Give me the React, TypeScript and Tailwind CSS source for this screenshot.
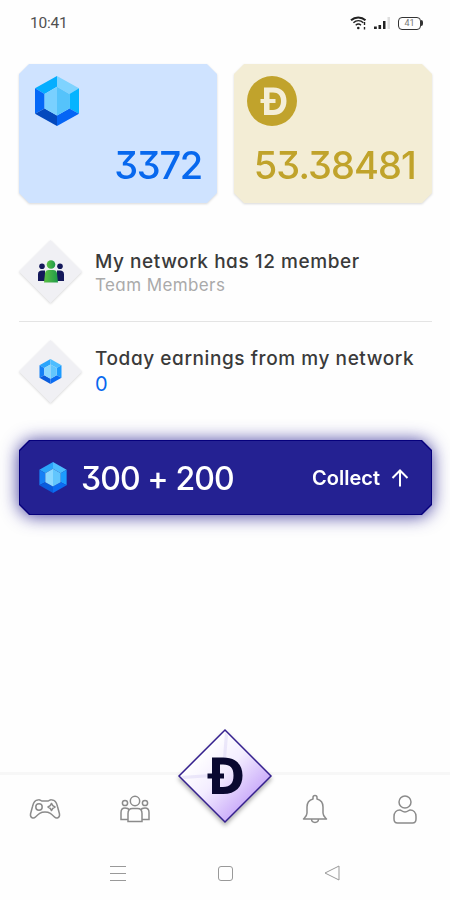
import type { ReactNode } from "react";
import clsx from "clsx";

const cutCorners =
  "[clip-path:polygon(10px_0,calc(100%-10px)_0,100%_10px,100%_calc(100%-10px),calc(100%-10px)_100%,10px_100%,0_calc(100%-10px),0_10px)]";

function Gem({ className }: { className?: string }) {
  return (
    <svg className={className} viewBox="0 0 44 50">
      <path fill="#05aeff" d="M22 0 0 12.3l9.6 5.7L22 10.8z" />
      <path fill="#7fd3ff" d="m22 0 22 12.3-9.6 5.7L22 10.8z" />
      <path fill="#0568f7" d="M0 12.3 9.6 18v14.6L0 37.7z" />
      <path fill="#05b4ff" d="M44 12.3 34.4 18v14.6l9.6 5.1z" />
      <path fill="#0449bd" d="m0 37.7 9.6-5.1L22 39.4V50z" />
      <path fill="#0565f5" d="m44 37.7-9.6-5.1L22 39.4V50z" />
      <path fill="#79d0ff" d="m22 10.8-12.4 7.2v14.6L22 39.4z" />
      <path fill="#55c3fb" d="m22 10.8 12.4 7.2v14.6L22 39.4z" />
    </svg>
  );
}

// softer shading, used where the gem is drawn small
function SmallGem({ className }: { className?: string }) {
  return (
    <svg className={className} viewBox="0 0 44 50">
      <path fill="#2aa5fb" d="M22 0 0 12.3l9.6 5.7L22 10.800z" />
      <path fill="#4dbdff" d="m22 0 22 12.3-9.6 5.7L22 10.8z" />
      <path fill="#1580f5" d="M0 12.3 9.6 18v14.6L0 37.7z" />
      <path fill="#1c9cff" d="M44 12.3 34.4 18v14.6l9.6 5.1z" />
      <path fill="#0a5cdc" d="m0 37.7 9.6-5.1L22 39.4V50z" />
      <path fill="#0b6cf2" d="m44 37.7-9.6-5.1L22 39.4V50z" />
      <path fill="#8ad8ff" d="m22 10.8-12.4 7.2v14.6L22 39.4z" />
      <path fill="#62c6fd" d="m22 10.8 12.4 7.2v14.6L22 39.4z" />
    </svg>
  );
}

function StatusBar() {
  return (
    <div className="flex h-[46px] items-center justify-between pr-[27px] pl-[30px]">
      <span className="pt-0.5 font-[Roboto] text-[15.5px] tracking-[-0.2px] text-[#505050]">10:41</span>
      <div className="flex items-center gap-[7px] text-[#222]">
        <svg className="h-[14px] w-[17px]" viewBox="0 0 17 14" fill="none" stroke="currentColor">
          <path strokeWidth="2" d="M1 4.2C5 .5 11.500.5 15.500 4.200" />
          <path strokeWidth="1.500" d="M3.400 6.700c3-2.700 7-2.700 10 0" />
          <path strokeWidth="1.400" d="M5.700 9.200c1.700-1.400 3.700-1.400 5.300 0" />
          <path strokeWidth="1.400" d="M14.500 6v3M14.500 11v2.500" />
          <circle cx="8.300" cy="12" r="1.300" fill="currentColor" stroke="none" />
        </svg>
        <svg className="h-[14px] w-[17px]" viewBox="0 0 17 14" fill="currentColor">
          <path d="M0 10.500h2.800V13H0zM4.500 9h2.600v4H4.500zM9 5h2.500v8H9z" />
          <path fill="#dedede" d="M13.500 1h2.500v12h-2.500z" />
        </svg>
        <div className="flex items-center">
          <span className="flex h-[13px] w-[23px] items-center justify-center rounded-[4px] border-[1.5px] border-[#333] font-[Roboto] text-[9px] leading-none text-[#777]">
            41
          </span>
          <span className="h-[6px] w-[2px] rounded-r bg-[#333]" />
        </div>
      </div>
    </div>
  );
}

function BalanceCard({ icon, value, className }: { icon: ReactNode; value: string; className: string }) {
  return (
    <div className="flex-1 drop-shadow-[0_1px_1px_rgba(0,0,0,0.15)]">
      <div className={clsx("flex h-[139px] flex-col justify-between pt-3", cutCorners, className)}>
        <div className="flex h-[50px]">{icon}</div>
        <div className="mb-[13px] text-right text-[38px] leading-[50px] font-[450]">{value}</div>
      </div>
    </div>
  );
}

function DogeCoin() {
  return (
    <svg className="size-[50px]" viewBox="0 0 50 50">
      <circle cx="25" cy="25" r="25" fill="#c1a32c" />
      <path
        fill="#f4eed7"
        fillRule="evenodd"
        d="M17 11.500h9.500c8.500 0 13 5.700 13 13.500S35 39 26.500 39H17V27h-3.500v-4H17zm5.500 5V23h6v4h-6v7H26c5.300 0 8-3.600 8-9s-2.700-8.500-8-8.500z"
      />
    </svg>
  );
}

function DiamondTile({ children }: { children: ReactNode }) {
  return (
    <div className="drop-shadow-[0_1px_1px_rgba(0,0,0,0.15)]">
      <div className="flex size-[63px] items-center justify-center bg-[#f0f0f4] [clip-path:polygon(50%_0,100%_50%,50%_100%,0_50%)]">
        {children}
      </div>
    </div>
  );
}

function TeamIcon() {
  return (
    <svg className="h-[23px] w-[26px]" viewBox="0 0 26 23">
      <defs>
        <linearGradient id="team" x1="0" x2="1">
          <stop offset="0" stopColor="#5cc043" />
          <stop offset="1" stopColor="#1f9a4a" />
        </linearGradient>
      </defs>
      <g fill="#14185a">
        <circle cx="4" cy="6.300" r="2.800" />
        <circle cx="22" cy="6.300" r="2.800" />
        <path d="M0 21v-6.500C0 11.500 1.500 10.500 4 10.500h3V21zM26 21v-6.500c0-3-1.500-4-4-4h-3V21z" />
      </g>
      <circle cx="13" cy="4.500" r="4.300" fill="url(#team)" />
      <path fill="url(#team)" d="m6 22.500 1-9c.300-2.500 1.500-3.500 4-3.500h4c2.500 0 3.700 1 4 3.500l1 9z" />
    </svg>
  );
}

function CollectButton() {
  return (
    <button className="mt-[37px] block w-full text-white drop-shadow-[0_1px_9px_rgba(27,20,140,0.85)]">
      <div className={clsx("bg-[#06007c] p-px", cutCorners)}>
        <div className={clsx("flex h-[73px] items-center bg-[#242192] pr-[22px] pl-[19px]", cutCorners)}>
          <SmallGem className="h-[31px] w-[28px]" />
          <span className="ml-[14px] pt-0.5 text-[32px] font-medium tracking-[-0.9px] whitespace-nowrap">300 + 200</span>
          <span className="ml-auto text-[20px] font-semibold">Collect</span>
          <svg className="ml-[11px] h-[18px] w-[18px]" viewBox="0 0 18 18" fill="none" stroke="currentColor" strokeWidth="2">
            <path d="M9 17.500V2M1.500 9 9 1.500 16.500 9" />
          </svg>
        </div>
      </div>
    </button>
  );
}

function CenterButton() {
  return (
    <svg
      className="absolute -top-[47px] left-1/2 h-[96px] w-[96px] -translate-x-1/2 drop-shadow-[0_3px_2px_rgba(0,0,0,0.3)]"
      viewBox="0 0 96 96"
    >
      <defs>
        <linearGradient id="tile" x1="0.250" y1="0.250" x2="0.750" y2="0.750">
          <stop offset="0" stopColor="#fff" />
          <stop offset="0.450" stopColor="#f3edff" />
          <stop offset="1" stopColor="#cdb0fa" />
        </linearGradient>
      </defs>
      <path fill="url(#tile)" stroke="#35208f" strokeWidth="1.500" d="M48 2 94 48 48 94 2 48z" />
      <path fill="#dcd6f6" opacity=".5" d="m48 4 3 3-2 24h-3zM4 48l30-2v3L7 51z" />
      <path
        fill="#090830"
        fillRule="evenodd"
        d="M35 29.500H46c13 0 19.500 7 19.500 18S59 66 46 66H35V50.500h-4.500v-5H35zm8 7v9H47v5h-4V59h3c7.500 0 10.500-4 10.500-11.500S53.500 36.500 46 36.500z"
      />
    </svg>
  );
}

function BottomNav() {
  const icon = "size-8 fill-none stroke-[#8b8b8b] stroke-[1.5]";
  return (
    <nav className="relative flex h-[72px] border-t-[3px] border-[#f7f7f7] pt-[18px]">
      <div className="flex flex-1 justify-center">
        <svg className={icon} viewBox="0 0 32 32">
          <path
            strokeLinejoin="round"
            d="M9 7c1.500-1 2.500.500 4 1h6c1.500-.5 2.500-2 4-1 3 0 4.500 2 5.500 6.500l2 7.500c.500 4-3 5-5 3-3-3-5-5-9.500-5s-6.500 2-9.500 5c-2 2-5.500 1-5-3l2-7.500C4.500 9 6 7 9 7z"
          />
          <circle cx="10" cy="14" r="3.200" />
          <path strokeLinejoin="round" d="m22.500 10.500 1.300 2.200L26 14l-2.200 1.300-1.300 2.200-1.300-2.200L19 14l2.200-1.300z" />
        </svg>
      </div>
      <div className="flex flex-1 justify-center">
        <svg className={icon} viewBox="0 0 32 32">
          <circle cx="16" cy="8" r="4.700" />
          <circle cx="6" cy="10" r="2.600" />
          <circle cx="26" cy="10" r="2.600" />
          <path d="M9 28.500V20.500c0-3.500 2-5 4.500-5h5c2.500 0 4.500 1.500 4.500 5v8zM9 26.500H2v-7C2 16.500 3.500 15 6 15c2 0 3.500.500 4.200 2M23 26.500h7v-7c0-3-1.500-4.500-4-4.500-2 0-3.500.500-4.200 2" />
        </svg>
      </div>
      <div className="flex-1">
        <CenterButton />
      </div>
      <div className="flex flex-1 justify-center">
        <svg className={icon} viewBox="0 0 32 32">
          <path strokeLinejoin="round" d="M14 6V4.500a2 2 0 0 1 4 0V6c4 1 6 4 6 8v6c0 3 1.500 4 3.500 6h-23C6.500 24 8 23 8 20v-6c0-4 2-7 6-8zM12.500 26c0 4.500 7 4.500 7 0" />
        </svg>
      </div>
      <div className="flex flex-1 justify-center">
        <svg className={icon} viewBox="0 0 32 32">
          <circle cx="16" cy="9" r="6" />
          <path strokeLinejoin="round" d="M11 17c-3.500 0-6 2.500-6 6.500V26c0 2.500 1.500 4 3.500 4h15c2 0 3.500-1.500 3.500-4v-2.500c0-4-2.500-6.500-6-6.500-1.500 0-2 2-5 2s-3.500-2-5-2z" />
        </svg>
      </div>
    </nav>
  );
}

function SystemNav() {
  return (
    <div className="flex h-[56px] items-center justify-between px-[110px] pt-0.5 text-[#999]">
      <div className="flex w-4 flex-col gap-[6px]">
        <span className="h-px bg-current" />
        <span className="h-px bg-current" />
        <span className="h-px bg-current" />
      </div>
      <span className="size-[15px] rounded-[3px] border border-current" />
      <svg className="h-4 w-4" viewBox="0 0 16 16" fill="none" stroke="currentColor">
        <path d="M15 1v14L1 8z" strokeLinejoin="round" />
      </svg>
    </div>
  );
}

export default function App() {
  return (
    <div className="flex h-[900px] w-[450px] flex-col overflow-hidden bg-[#fefefe] font-[Inter,sans-serif] [font-feature-settings:'cv09','cv11']">
      <StatusBar />

      <main className="flex-1 pt-[18px] pr-[18px] pl-[19px]">
        <div className="flex gap-[17px]">
          <BalanceCard
            icon={<Gem className="ml-4 h-[50px] w-11" />}
            value="3372"
            className="bg-[#cfe3ff] pr-[15px] tracking-[-1.3px] text-[#0768ee]"
          />
          <BalanceCard
            icon={<div className="ml-[13px]"><DogeCoin /></div>}
            value="53.38481"
            className="bg-[#f3edd5] pr-[16px] tracking-[-0.9px] text-[#c0a32b]"
          />
        </div>

        <div className="mt-[37px] flex">
          <DiamondTile>
            <TeamIcon />
          </DiamondTile>
          <div className="ml-[13px] pt-[10px]">
            <p className="text-[19px] leading-6 font-medium tracking-[0.55px] whitespace-nowrap text-[#3a3a3a]">My network has 12 member</p>
            <p className="-mt-px text-[17px] leading-6 tracking-[0.4px] text-[#aaa]">Team Members</p>
          </div>
        </div>

        <div className="mt-[18px] border-t border-[#e4e4e4]" />

        <div className="mt-[18px] flex">
          <DiamondTile>
            <SmallGem className="h-[25px] w-[23px]" />
          </DiamondTile>
          <div className="ml-[13px] pt-[7px]">
            <p className="text-[19px] leading-6 font-medium tracking-[0.58px] whitespace-nowrap text-[#3a3a3a]">Today earnings from my network</p>
            <p className="mt-px text-[20px] leading-6 text-[#0768ee]">0</p>
          </div>
        </div>

        <CollectButton />
      </main>

      <BottomNav />
      <SystemNav />
    </div>
  );
}
